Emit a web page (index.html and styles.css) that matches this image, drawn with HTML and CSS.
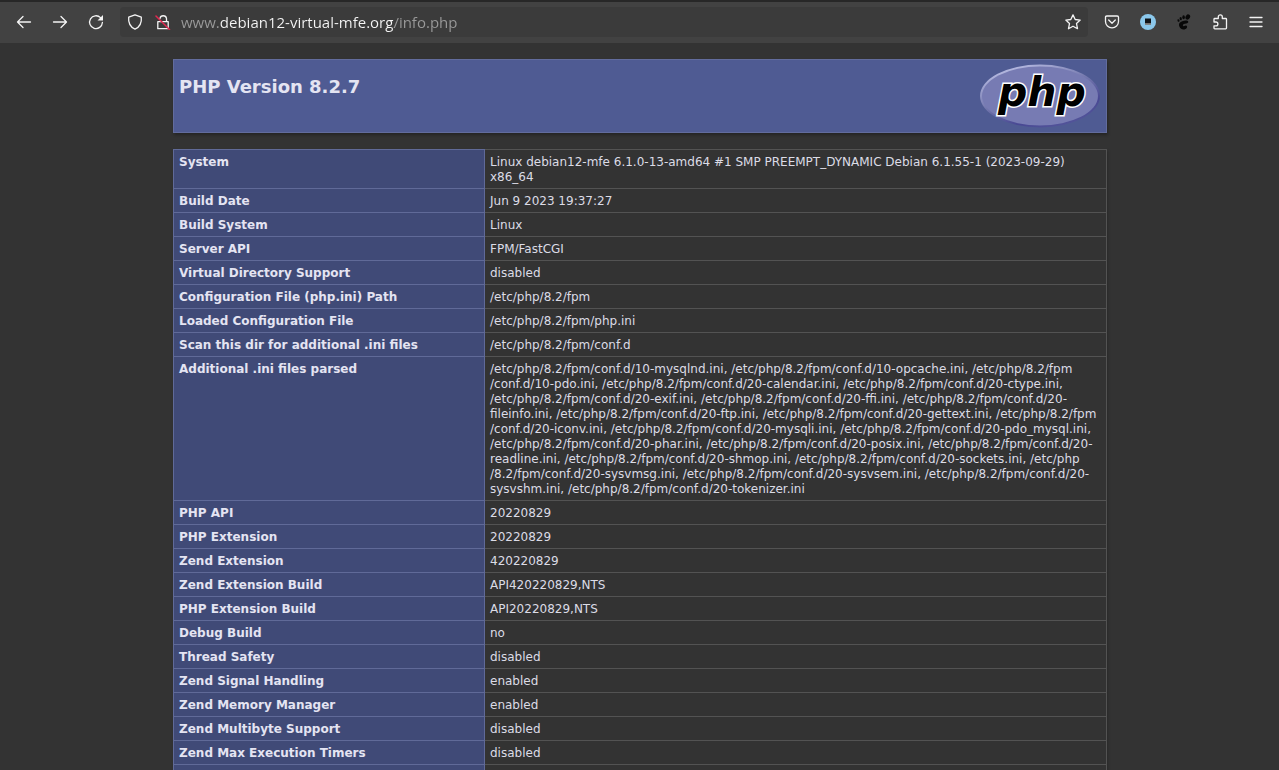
FILE: index.html
```html
<!DOCTYPE html>
<html lang="en">
<head>
<meta charset="utf-8">
<title>PHP 8.2.7 - phpinfo()</title>
<link rel="stylesheet" href="styles.css">
</head>
<body>
<header class="toolbar">
  <button class="tool" aria-label="Back"><svg class="icon" viewBox="0 0 16 16"><path d="M14.500 8H2M7 2.500L1.500 8L7 13.500"/></svg></button>
  <button class="tool" aria-label="Forward"><svg class="icon" viewBox="0 0 16 16"><path d="M1.500 8H14M9 2.500L14.500 8L9 13.500"/></svg></button>
  <button class="tool" aria-label="Reload"><svg class="icon" viewBox="0 0 16 16"><path d="M12.500 3.600A6.400 6.400 0 1 0 14.400 8.500"/><path class="solid" d="M15 1V6.500H9.500Z"/></svg></button>
  <div class="address">
    <button class="mini" aria-label="Tracking protection"><svg class="icon" viewBox="0 0 16 16"><path d="M8 .8L14.300 3.200C14.900 9 12.500 13 8 15.200C3.500 13 1.100 9 1.700 3.200Z"/></svg></button>
    <button class="mini" aria-label="Connection not secure"><svg class="icon" viewBox="0 0 16 16"><path d="M5 4.500A3.300 3.300 0 0 1 11.500 4.500V7.700M2.800 7.700H13.200V14.700H2.800Z"/><path class="slash" d="M1 2L14.500 15.500"/></svg></button>
    <input class="url" type="text" aria-label="Address" value="www.debian12-virtual-mfe.org/info.php">
    <button class="mini star" aria-label="Bookmark"><svg class="icon" viewBox="0 0 16 16"><path d="M8 .9L10.200 5.500L15.200 6.100L11.500 9.500L12.500 14.700L8 12.200L3.500 14.700L4.500 9.500L.8 6.100L5.800 5.500Z"/></svg></button>
  </div>
  <button class="tool" aria-label="Pocket"><svg class="icon" viewBox="0 0 16 16"><path d="M2.800 2H13.200Q14.500 2 14.500 3.300V7.500A6.500 6.300 0 0 1 1.500 7.500V3.300Q1.500 2 2.800 2ZM4.700 6L8 9.200L11.300 6"/></svg></button>
  <button class="tool" aria-label="Screen extension"><svg class="icon" viewBox="0 0 16 16"><circle class="sky" cx="8" cy="8" r="8"/><path class="screen" d="M5 4.500H11V10.500H5Z"/><path class="base" d="M5 9.200H11V10.800H5Z"/></svg></button>
  <button class="tool" aria-label="GNOME extension"><svg class="icon foot" viewBox="0 0 16 16"><ellipse cx="11.800" cy="3" rx="2.100" ry="2.700" transform="rotate(35 11.800 3)"/><ellipse cx="7.600" cy="3.300" rx="1.300" ry="2"/><ellipse cx="4.700" cy="4.700" rx="1.100" ry="1.600" transform="rotate(-15 4.700 4.700)"/><ellipse cx="2.500" cy="6.500" rx="1" ry="1.300" transform="rotate(-25 2.500 6.500)"/><path d="M12.200 7.500C11.800 5.600 5.500 6.300 3.500 9C2 11.200 4 15.500 7.500 15.500C10.500 15.500 12 12.800 10.500 11.700C9.400 11 8.500 12.700 7.300 12C6 11.200 7.300 10 9 9.800C11 9.500 12.600 9 12.200 7.500Z"/></svg></button>
  <button class="tool" aria-label="Extensions"><svg class="icon" viewBox="0 0 16 16"><path d="M2 6V5.200Q2 4.500 2.700 4.500H6.300V2.800A2 2 0 0 1 10.300 2.800V4.500H13.700Q14.500 4.500 14.500 5.200V14Q14.500 14.800 13.700 14.800H2.800Q2 14.800 2 14V11.800H4A1.900 1.900 0 0 0 4 8H2Z"/></svg></button>
  <button class="tool" aria-label="Menu"><svg class="icon" viewBox="0 0 16 16"><path d="M2 3.500H14M2 8H14M2 12.500H14"/></svg></button>
</header>
<main class="page">
  <div class="banner">
    <h1 class="version">PHP Version 8.2.7</h1>
    <svg class="logo" viewBox="0 0 120 64" role="img" aria-label="PHP logo">
      <defs>
        <linearGradient id="rim" x1="0.200" y1="0" x2="0.800" y2="1">
          <stop offset="0" stop-color="#bfc3e8"/><stop offset="0.450" stop-color="#7377ad"/><stop offset="0.750" stop-color="#484893"/><stop offset="1" stop-color="#56589b"/>
        </linearGradient>
      </defs>
      <ellipse cx="60" cy="32" rx="60" ry="31.500" fill="url(#rim)"/>
      <ellipse cx="60" cy="32" rx="58" ry="29.500" fill="#777bb3"/>
      <text class="mark" x="18" y="42">php</text>
    </svg>
  </div>
  <table class="info">
    <tr><th scope="row">System</th><td>Linux debian12-mfe 6.1.0-13-amd64 #1 SMP PREEMPT_DYNAMIC Debian 6.1.55-1 (2023-09-29) x86_64</td></tr>
    <tr><th scope="row">Build Date</th><td>Jun 9 2023 19:37:27</td></tr>
    <tr><th scope="row">Build System</th><td>Linux</td></tr>
    <tr><th scope="row">Server API</th><td>FPM/FastCGI</td></tr>
    <tr><th scope="row">Virtual Directory Support</th><td>disabled</td></tr>
    <tr><th scope="row">Configuration File (php.ini) Path</th><td>/etc/php/8.2/fpm</td></tr>
    <tr><th scope="row">Loaded Configuration File</th><td>/etc/php/8.2/fpm/php.ini</td></tr>
    <tr><th scope="row">Scan this dir for additional .ini files</th><td>/etc/php/8.2/fpm/conf.d</td></tr>
    <tr><th scope="row">Additional .ini files parsed</th><td>/etc/php/8.2/fpm/conf.d/10-mysqlnd.ini, /etc/php/8.2/fpm/conf.d/10-opcache.ini, /etc/php/8.2/fpm<wbr>/conf.d/10-pdo.ini, /etc/php/8.2/fpm/conf.d/20-calendar.ini, /etc/php/8.2/fpm/conf.d/20-ctype.ini, /etc/php/8.2/fpm/conf.d/20-exif.ini, /etc/php/8.2/fpm/conf.d/20-ffi.ini, /etc/php/8.2/fpm/conf.d/20-<wbr>fileinfo.ini, /etc/php/8.2/fpm/conf.d/20-ftp.ini, /etc/php/8.2/fpm/conf.d/20-gettext.ini, /etc/php/8.2/fpm<wbr>/conf.d/20-iconv.ini, /etc/php/8.2/fpm/conf.d/20-mysqli.ini, /etc/php/8.2/fpm/conf.d/20-pdo_mysql.ini, /etc/php/8.2/fpm/conf.d/20-phar.ini, /etc/php/8.2/fpm/conf.d/20-posix.ini, /etc/php/8.2/fpm/conf.d/20-<wbr>readline.ini, /etc/php/8.2/fpm/conf.d/20-shmop.ini, /etc/php/8.2/fpm/conf.d/20-sockets.ini, /etc/php<wbr>/8.2/fpm/conf.d/20-sysvmsg.ini, /etc/php/8.2/fpm/conf.d/20-sysvsem.ini, /etc/php/8.2/fpm/conf.d/20-<wbr>sysvshm.ini, /etc/php/8.2/fpm/conf.d/20-tokenizer.ini</td></tr>
    <tr><th scope="row">PHP API</th><td>20220829</td></tr>
    <tr><th scope="row">PHP Extension</th><td>20220829</td></tr>
    <tr><th scope="row">Zend Extension</th><td>420220829</td></tr>
    <tr><th scope="row">Zend Extension Build</th><td>API420220829,NTS</td></tr>
    <tr><th scope="row">PHP Extension Build</th><td>API20220829,NTS</td></tr>
    <tr><th scope="row">Debug Build</th><td>no</td></tr>
    <tr><th scope="row">Thread Safety</th><td>disabled</td></tr>
    <tr><th scope="row">Zend Signal Handling</th><td>enabled</td></tr>
    <tr><th scope="row">Zend Memory Manager</th><td>enabled</td></tr>
    <tr><th scope="row">Zend Multibyte Support</th><td>disabled</td></tr>
    <tr><th scope="row">Zend Max Execution Timers</th><td>disabled</td></tr>
    <tr><th scope="row">&nbsp;</th><td>&nbsp;</td></tr>
  </table>
</main>
</body>
</html>
```

FILE: styles.css
```css
* { box-sizing: border-box; }
body {
  margin: 0;
  height: 100vh;
  display: flex;
  flex-direction: column;
  overflow: hidden;
  background: #333;
  color: #dcdce6;
  font-family: "DejaVu Sans", sans-serif;
  font-size: 12px;
  line-height: 15px;
}
.toolbar {
  flex: none;
  display: flex;
  align-items: center;
  height: 43px;
  padding: 0 5px 1px 6px;
  background: #424242;
  border-top: 2px solid #272727;
}
.tool, .mini {
  flex: none;
  display: grid;
  place-items: center;
  width: 36px;
  height: 32px;
  padding: 0;
  border: 0;
  background: none;
}
.mini { width: 28px; }
.star { width: 30px; }
.icon {
  width: 16px;
  height: 16px;
  fill: none;
  stroke: #f4f4f4;
  stroke-width: 1.3;
  stroke-linecap: round;
  stroke-linejoin: round;
}
.icon .solid { fill: #f4f4f4; stroke: none; }
.icon .slash { stroke: #e22850; stroke-width: 1.5; }
.icon .sky { fill: #8bc8ec; stroke: none; }
.icon .screen { fill: #101418; stroke: none; }
.icon .base { fill: #8f8c8a; stroke: none; }
.foot { fill: #080808; stroke: none; }
.address {
  flex: 1;
  min-width: 0;
  display: flex;
  align-items: center;
  height: 30px;
  margin: 0 6px;
  padding-left: 1px;
  border-radius: 4px;
  background: #3b3b3b;
}
.url {
  flex: 1;
  min-width: 0;
  height: 30px;
  padding: 0 4px;
  border: 0;
  outline: 0;
  font-family: "Open Sans", sans-serif;
  font-size: 15px;
  background: linear-gradient(90deg, #9a9a9a 43px, #f6f6f6 43px, #f6f6f6 217px, #9a9a9a 217px);
  background-clip: text;
  -webkit-background-clip: text;
  -webkit-text-fill-color: transparent;
}
.page {
  flex: 1;
  min-height: 0;
  width: 100%;
  max-width: 967px;
  margin: 0 auto;
  padding: 16px 16px 0 17px;
  overflow: hidden;
}
.banner {
  display: flex;
  justify-content: space-between;
  align-items: flex-start;
  height: 74px;
  margin-bottom: 16px;
  padding: 4px 6px 4px 5px;
  background: #4f5b93;
  border: 1px solid #626c9d;
  box-shadow: 1px 2px 3px rgba(0, 0, 0, 0.3);
}
.version {
  margin: 12px 0 0;
  font-size: 18px;
  line-height: 22px;
  color: #e4e4f2;
}
.logo { width: 120px; height: 64px; }
.mark {
  font: italic bold 41px "DejaVu Sans", sans-serif;
  fill: #000;
  stroke: #fff;
  stroke-width: 3px;
  stroke-linejoin: miter;
  paint-order: stroke;
}
.info {
  width: 100%;
  border-collapse: collapse;
  box-shadow: 1px 2px 3px rgba(0, 0, 0, 0.2);
}
.info th, .info td {
  padding: 5px 5px 3px;
  border: 1px solid #535353;
  text-align: left;
  vertical-align: top;
  overflow-wrap: anywhere;
}
.info th {
  width: 311px;
  background: #404a77;
  border-color: #606a98;
  color: #e4e4f2;
}
```
